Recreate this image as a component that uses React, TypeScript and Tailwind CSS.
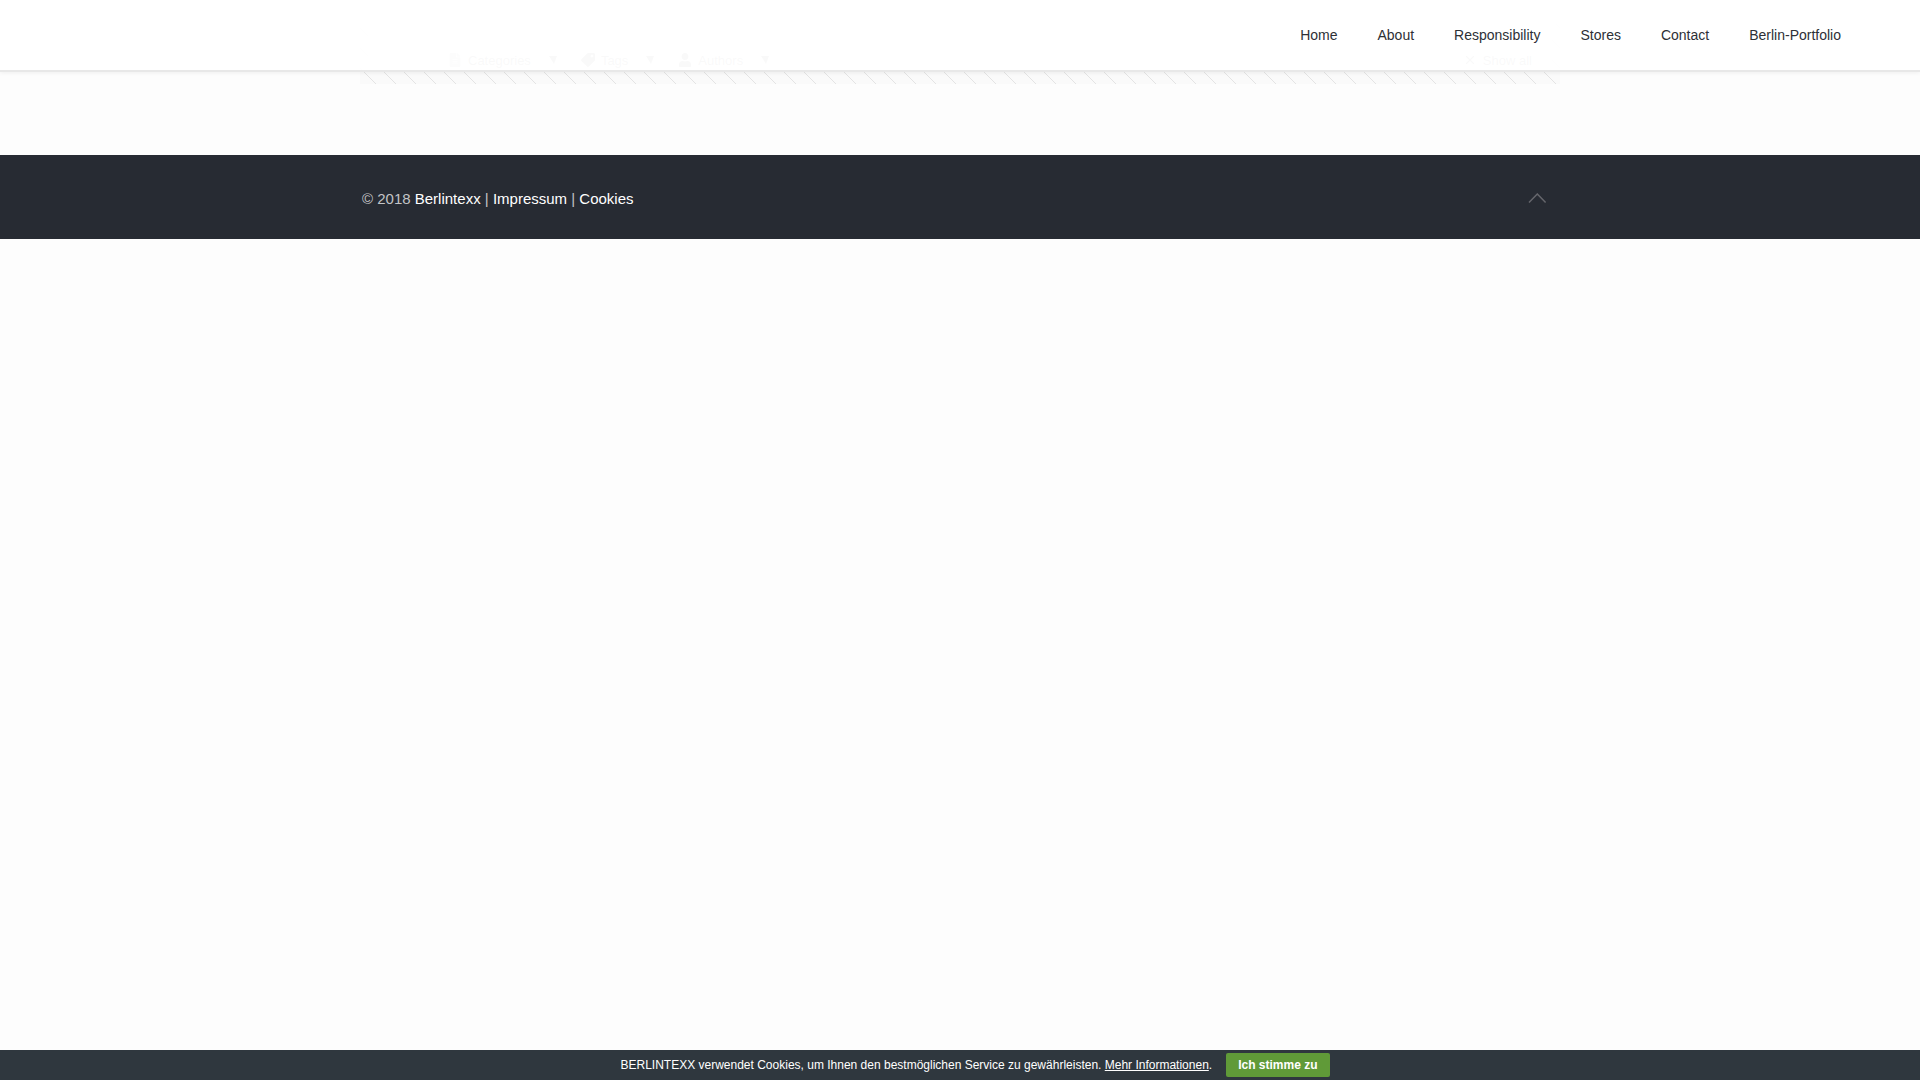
import { FaFileAlt, FaTag, FaUser } from "react-icons/fa";
import { X } from "lucide-react";

const menu = ["Home", "About", "Responsibility", "Stores", "Contact", "Berlin-Portfolio"];

const filters = [
  { label: "Categories", icon: FaFileAlt, iconClass: "size-3.5 opacity-60" },
  { label: "Tags", icon: FaTag, iconClass: "size-3.5 rotate-90" },
  { label: "Authors", icon: FaUser, iconClass: "size-3.5" },
];

function StickyHeader() {
  return (
    <header className="sticky top-0 z-10 border-b-2 border-[#e8e8e8] bg-white/95 shadow-[0_1px_4px_rgba(0,0,0,0.06)]">
      <nav className="flex h-[70px] items-center justify-end gap-10 pr-[79px]">
        {menu.map((item) => (
          <a key={item} href="#" className="text-sm text-[#2d3036]">
            {item}
          </a>
        ))}
      </nav>
    </header>
  );
}

// Diagonal hatch, one line every 20px
function Stripes() {
  return (
    <svg className="absolute inset-0 size-full" aria-hidden="true" shapeRendering="crispEdges">
      <defs>
        <pattern id="stripes" width="20" height="20" patternUnits="userSpaceOnUse">
          <path d="M0 4l16 16M16 0l4 4" stroke="#e4e4e4" strokeWidth="1" />
        </pattern>
      </defs>
      <rect width="100%" height="100%" fill="url(#stripes)" />
    </svg>
  );
}

function FilterBar() {
  return (
    <section className="relative mx-auto -mt-12 h-15 w-full max-w-[1200px] bg-[#fafafa]">
      <Stripes />
      <div className="relative mx-2 flex h-12 items-end justify-between bg-white pr-5 pb-0.5 pl-20 text-[13px] text-[#8a8a8a]">
        <div className="flex gap-6">
          {filters.map(({ label, icon: Icon, iconClass }) => (
            <a key={label} href="#" className="flex items-center gap-1.5">
              <Icon className={iconClass} />
              {label}
              <svg viewBox="0 0 8 8" className="ml-3 size-2" fill="currentColor">
                <path d="M0 0h8L5 8z" />
              </svg>
            </a>
          ))}
        </div>
        <a href="#" className="flex items-center gap-1.5">
          <X className="size-3.5" />
          Show all
        </a>
      </div>
    </section>
  );
}

function Footer() {
  return (
    <footer className="bg-[#272b33]">
      <div className="mx-auto flex h-21 max-w-[1240px] items-center justify-between pt-1 pr-[33px] pl-[22px]">
        <p className="text-[15px] text-[#c3c4c6]">
          © 2018{" "}
          <a href="#" className="text-white">Berlintexx</a> |{" "}
          <a href="#" className="text-white">Impressum</a> |{" "}
          <a href="#" className="text-white">Cookies</a>
        </p>
        <button type="button" aria-label="Back to top">
          <svg viewBox="0 0 20 12" className="h-3 w-5" fill="none" stroke="#65666c" strokeWidth="1.5">
            <path d="M2 9.5 10.3 1l8.3 8.5" />
          </svg>
        </button>
      </div>
    </footer>
  );
}

function CookieBar() {
  return (
    <div className="fixed inset-x-0 bottom-0 flex h-[30px] items-center justify-center bg-[#2f373e] pl-[30px] text-xs text-white">
      <p>
        BERLINTEXX verwendet Cookies, um Ihnen den bestmöglichen Service zu gewährleisten.{" "}
        <a href="#" className="underline">Mehr Informationen</a>.
      </p>
      <button type="button" className="ml-3.5 h-6 rounded-xs bg-[#609a38] px-3 font-bold">
        Ich stimme zu
      </button>
    </div>
  );
}

export default function App() {
  return (
    <div className="min-h-screen bg-[#fdfdfd] font-['Liberation_Sans',Arial,sans-serif]">
      <StickyHeader />
      <main className="pb-[71px]">
        <FilterBar />
      </main>
      <Footer />
      <CookieBar />
    </div>
  );
}
